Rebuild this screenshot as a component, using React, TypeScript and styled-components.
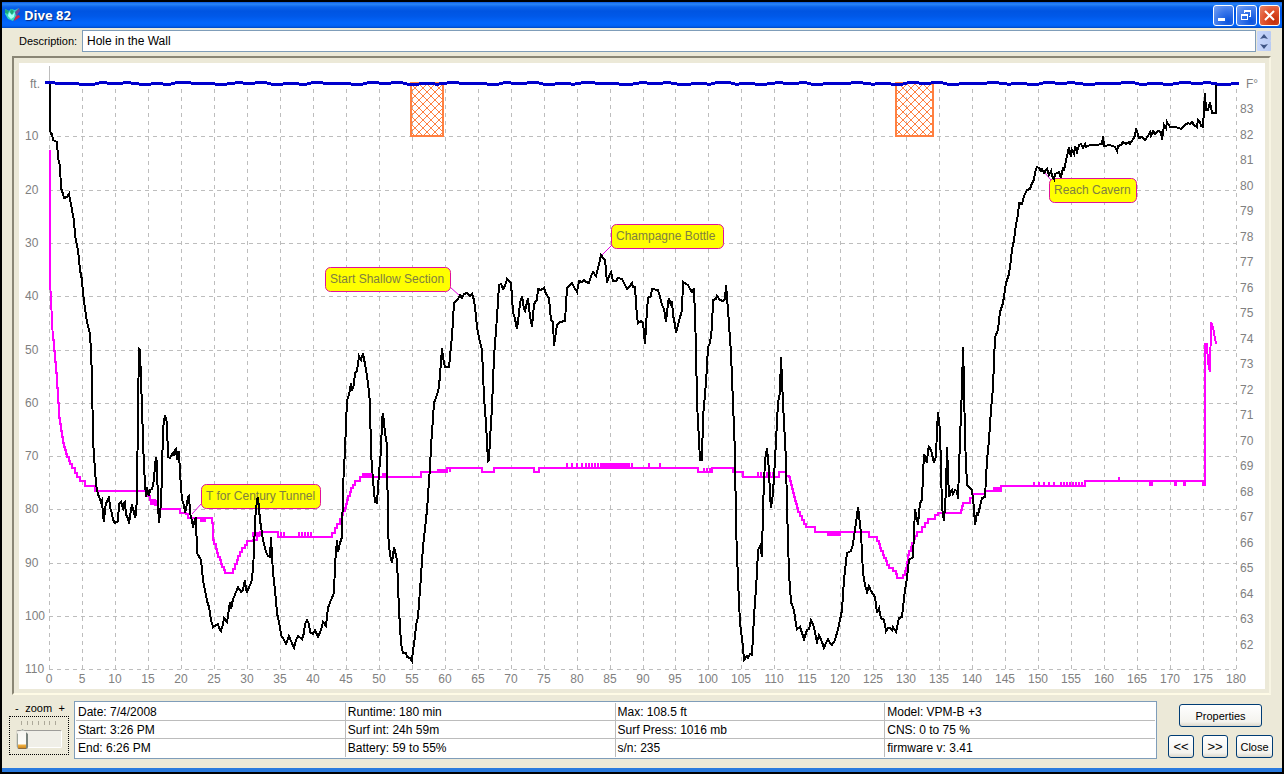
import React from "react";
import styled, { createGlobalStyle, css } from "styled-components";

const face = "#ece9d8";
const sans = '"Liberation Sans", Arial, sans-serif';

const GlobalStyle = createGlobalStyle`
  * { box-sizing: border-box; }
  body { margin: 0; background: #000; color: #000; font: 12px/16px ${sans}; }
`;

const Desktop = styled.div`
  display: flex;
  min-height: 100vh;
  padding: 2px;
  background: #000;
`;

const Window = styled.main`
  display: flex;
  flex: 1;
  flex-direction: column;
  min-width: 0;
  background: ${face};
  border-bottom: 4px solid #2a7ade;
`;

const TitleBar = styled.header`
  display: flex;
  align-items: center;
  gap: 3px;
  height: 26px;
  padding: 0 2px;
  background: linear-gradient(#0c5be0 0, #2a86f8 2px, #0a62ea 5px, #0055e2 9px, #0058e8 14px, #0366fc 21px, #0262f4 24px, #0048c4 26px);
`;

const Title = styled.h1`
  flex: 1;
  margin: 0;
  color: #fff;
  font: bold 13px/18px "Open Sans", "Noto Sans", sans-serif;
  text-shadow: 1px 1px 1px #0a2a80;
`;

const CaptionButtons = styled.div`
  display: flex;
  gap: 2px;
`;

const CaptionButton = styled.button<{ $close?: boolean }>`
  display: grid;
  place-items: center;
  width: 21px;
  height: 21px;
  padding: 0;
  border: 1px solid #fff;
  border-radius: 3px;
  background: ${(p) =>
    p.$close
      ? "radial-gradient(circle at 75% 80%, #c22d0a 0%, #e0502c 50%, #e98a6c 100%)"
      : "radial-gradient(circle at 75% 80%, #0a52dc 0%, #3a76ea 50%, #7da4f2 100%)"};
`;

const DescriptionRow = styled.div`
  display: flex;
  padding: 2px 11px 4px 17px;
`;

const DescriptionLabel = styled.label`
  width: 63px;
  font-size: 11px;
  line-height: 22px;
`;

const DescriptionInput = styled.input`
  flex: 1;
  min-width: 0;
  height: 22px;
  padding: 0 4px;
  border: 1px solid #7f9db9;
  background: #fff;
  color: #000;
  font: 12px/16px ${sans};
`;

const Spinner = styled.div`
  display: flex;
  flex-direction: column;
  margin: 1px 0 1px 1px;
`;

const SpinnerButton = styled.button`
  display: grid;
  flex: 1;
  place-items: center;
  width: 14px;
  padding: 0;
  border: 0;
  border-radius: 1px;
  background: linear-gradient(90deg, #c9d8fc, #b9cbf3);
`;

const ChartFrame = styled.section`
  margin: 0 11px 0 10px;
  padding: 5px 4px 4px 5px;
  border: 2px solid;
  border-color: #8a8675 #f8f5e4 #fffbe6 #8a8675;
`;

const Plot = styled.svg`
  display: block;
  width: 100%;
  height: auto;
  background: #fff;
  font: 12px ${sans};
`;

const Footer = styled.footer`
  display: flex;
  flex: 1;
  align-items: flex-start;
  padding: 6px 9px 9px 7px;
`;

const ZoomBox = styled.div`
  display: flex;
  flex-direction: column;
  width: 60px;
  margin-right: 5px;
`;

const ZoomLabel = styled.label`
  display: flex;
  justify-content: space-between;
  padding: 0 4px 0 6px;
  font-size: 11px;
  line-height: 15px;
`;

const SliderBox = styled.div`
  display: flex;
  flex-direction: column;
  gap: 3px;
  height: 39px;
  padding: 4px 6px;
  border: 1px dotted #000;
`;

const Ticks = styled.div`
  display: flex;
  justify-content: space-between;
  margin: 0 6px 0 5px;
`;

const Tick = styled.i`
  width: 1px;
  height: 4px;
  background: #aca899;
`;

const Slider = styled.input`
  width: 46px;
  height: 22px;
  margin: 0;
  appearance: none;
  background: none;

  &::-webkit-slider-runnable-track {
    height: 18px;
    border: 1px solid;
    border-color: #9d9c99 #fff #fff #d8d5c8;
    border-radius: 2px;
    background: #f0efe8;
  }

  &::-webkit-slider-thumb {
    appearance: none;
    width: 11px;
    height: 20px;
    margin-top: -2px;
    border-radius: 5px 5px 2px 2px;
    background:
      linear-gradient(90deg, #9aa39a 0 1px, transparent 1px 9px, #77807a 9px),
      linear-gradient(#8f9a94 0 1px, #f6f5ef 2px, #fdfdfb 15px, #f0b040 16px, #d08a20 19px, #8a6a40 19px);
    clip-path: polygon(50% 0, 100% 5px, 100% 100%, 0 100%, 0 5px);
  }
`;

const InfoBox = styled.div`
  flex: 1;
  min-width: 0;
  padding: 1px;
  border: 1px solid #7f9db9;
  background: #fff;
`;

const InfoTable = styled.table`
  width: 100%;
  border-collapse: separate;
  border-spacing: 0;
  table-layout: fixed;
`;

const InfoCell = styled.td<{ $lastRow: boolean; $lastColumn: boolean }>`
  height: 18px;
  padding: 2px 2px 0;
  overflow: hidden;
  line-height: 15px;
  vertical-align: top;
  white-space: nowrap;
  ${(p) => !p.$lastRow && css`border-bottom: 1px solid #bcbcbc;`}
  ${(p) => !p.$lastColumn && css`border-right: 1px solid #bcbcbc;`}
`;

const Actions = styled.div`
  display: flex;
  flex-direction: column;
  align-items: center;
  gap: 8px;
  margin: 3px 0 0 11px;
`;

const ActionRow = styled.div`
  display: flex;
  gap: 8px;
`;

const PushButton = styled.button<{ $width: number; $arrow?: boolean }>`
  width: ${(p) => p.$width}px;
  height: 23px;
  padding: 0;
  border: 1px solid #003c74;
  border-radius: 3px;
  background: linear-gradient(#fff, #f4f3ee 80%, #dcd8cc);
  color: #000;
  font: ${(p) => (p.$arrow ? 13 : 11)}px/16px ${sans};
`;

const gridColor = "#bdbdbd";
const temperatureColor = "#ff00ff";
const ceilingColor = "#ff8040";

type Point = [number, number];

const parse = (text: string): Point[] =>
  text.trim().split(/\s+/).map((pair) => pair.split(",").map(Number) as Point);

const depth = `
50,83 50,129 51,134 52,134 53,140 57,142 58,158 60,166 61,188 63,194 64,198 67,197 69,194 70,199 72,210 74,220
75,236 78,250 80,270 82,280 83,293 85,309 87,322 90,334 91,352 92,377 93,440 95,470 96,483 97,490 98,494 101,502
102,500 103,515 104,522 105,509 106,503 108,500 109,496 110,508 112,513 113,520 115,523 118,521 119,504 121,502
123,508 124,503 125,502 126,515 128,518 129,524 131,509 132,506 134,512 135,518 136,514 137,497 138,407 139,349
140,350 141,380 142,407 143,440 144,467 146,497 147,487 148,493 149,496 150,490 152,489 154,480 155,465 156,457
157,463 158,505 159,523 161,503 162,473 163,428 165,415 167,423 168,457 170,458 171,456 173,453 174,456 175,450
176,449 177,460 178,452 179,452 180,473 182,500 184,505 185,513 187,504 188,497 189,496 190,512 191,517 193,526
195,520 196,517 197,553 201,560 203,580 206,595 207,601 209,607 211,620 213,627 216,625 218,624 219,628 221,631
223,624 224,618 227,622 229,609 230,602 231,609 233,599 234,597 238,587 241,592 243,590 244,584 245,580 246,590
247,592 250,585 252,580 254,553 255,520 257,500 258,497 260,520 263,540 266,552 268,556 270,557 271,537 273,573
275,590 277,613 280,627 281,635 284,640 286,644 289,636 291,641 294,648 296,640 298,636 302,639 304,633 305,624
307,620 309,624 310,632 313,634 315,630 318,637 321,630 323,622 326,626 328,608 329,605 331,600 334,593 335,565
337,540 338,552 340,543 342,537 343,487 345,450 347,400 349,395 351,383 352,391 354,384 355,373 357,371 359,356
361,360 363,353 366,370 368,383 370,403 371,453 373,480 375,502 377,503 379,473 381,450 382,420 383,413 385,433
387,445 388,533 390,555 392,563 394,547 397,560 399,610 401,643 403,653 406,653 407,657 410,658 412,661 413,650
415,637 416,625 418,617 420,590 423,547 427,510 430,467 431,447 434,403 437,395 439,387 441,362 442,348 443,358
445,367 449,367 451,346 452,337 454,303 458,299 460,295 462,298 464,294 467,293 470,296 472,294 474,300 475,307
477,327 478,333 480,342 482,350 484,397 486,423 488,461 489,460 490,439 492,407 494,357 497,317 499,285 501,284
503,289 505,286 507,279 509,281 511,283 513,312 515,319 517,329 519,313 520,303 522,296 524,309 525,311 528,298
530,316 532,327 534,305 535,302 537,300 538,289 541,290 544,288 546,294 549,298 551,320 553,322 554,346 557,325
560,322 565,321 567,288 570,285 572,283 574,287 577,292 579,281 582,282 584,280 586,282 589,283 591,276 593,272
596,276 599,264 601,255 603,258 605,260 606,270 607,283 609,276 611,272 613,281 616,281 618,278 622,279 624,283
627,289 630,286 632,283 633,287 635,287 637,317 638,323 641,321 643,323 645,344 647,310 648,298 651,296 652,289
658,290 660,297 662,305 664,309 666,322 668,303 669,298 671,306 672,301 673,315 675,325 676,333 679,321 682,310
683,282 686,284 688,285 690,289 692,292 694,288 696,347 697,403 699,440 700,460 702,460 703,417 706,383 708,347
710,343 712,327 713,300 716,299 717,296 720,300 723,301 725,299 726,285 728,310 731,353 733,403 735,453 736,527
738,580 740,623 743,647 744,660 747,656 748,658 750,654 752,655 754,617 757,573 758,550 760,546 762,557 763,507
765,460 767,448 769,470 770,495 771,508 773,493 775,460 778,403 780,392 781,357 783,403 786,460 787,507 789,573
791,602 794,610 796,624 797,629 800,627 802,633 804,639 807,630 809,629 811,620 814,627 816,638 817,642 819,635
822,642 824,648 826,643 828,639 830,643 832,645 835,640 838,629 840,620 842,610 844,580 847,553 851,551 853,544
855,530 857,515 858,507 861,533 863,573 865,585 867,592 869,586 871,591 873,594 875,597 877,613 879,608 881,618
884,620 886,631 888,628 890,628 892,630 893,627 896,632 899,618 902,617 905,590 907,578 909,560 913,557 915,509
917,519 918,525 920,503 922,500 923,475 924,454 927,463 928,450 929,447 931,450 934,463 936,456 937,430 938,412
940,430 942,507 944,521 946,490 947,447 949,497 951,491 952,490 953,494 955,490 957,491 958,499 960,440 962,387
963,347 964,383 965,440 967,485 969,487 972,490 974,509 975,525 977,512 978,516 980,506 982,498 985,497 987,460
989,440 991,410 993,387 995,337 998,330 1000,312 1003,303 1006,283 1009,274 1010,267 1012,250 1014,240 1016,224
1018,215 1019,203 1022,204 1024,196 1027,190 1030,189 1032,183 1034,180 1035,172 1037,167 1039,168 1041,171
1042,169 1044,173 1046,170 1047,169 1049,175 1051,171 1052,176 1054,179 1055,174 1059,172 1061,178 1063,167
1064,171 1066,160 1068,152 1069,147 1071,157 1072,150 1074,154 1075,146 1077,152 1079,145 1081,144 1083,148
1085,144 1086,147 1090,145 1096,145 1102,144 1103,136 1104,146 1110,145 1115,147 1117,151 1118,146 1121,145
1123,142 1126,144 1129,142 1130,144 1133,139 1135,136 1136,128 1138,135 1139,138 1142,137 1145,140 1148,136
1150,132 1151,136 1153,131 1155,134 1158,131 1161,132 1162,140 1164,125 1166,128 1167,122 1170,127 1176,127
1181,129 1185,125 1188,123 1190,124 1192,122 1194,125 1197,127 1198,120 1200,122 1201,126 1203,127 1205,93
1206,110 1208,110 1210,102 1212,113 1216,113 1216,83`;

const temperature = `
50,150 50,280 52,320 53,340 56,373 59,418 63,443 67,457 72,468 77,477 80,481 85,486 95,491 145,491 150,500
155,505 158,509 178,509 180,513 186,514 188,518 212,523 213,540 217,553 222,567 225,573 230,573 235,564
240,552 247,541 253,540 257,535 260,532 277,532 278,537 329,537 335,528 342,515 347,500 351,488 355,481
360,477 420,477 421,472 446,472 447,468 482,468 482,472 493,472 494,468 533,468 534,472 538,472 539,468
698,468 698,472 711,472 712,468 732,468 733,472 742,472 743,477 778,477 779,472 784,472 786,476 789,477
793,493 798,512 802,520 806,527 814,527 815,532 868,532 869,537 876,537 880,548 884,558 889,568 896,574
897,578 902,578 906,568 908,555 912,543 917,532 922,527 928,519 935,515 938,513 960,513 963,503 970,498
973,494 983,494 985,491 1000,491 1001,486 1084,486 1085,481 1150,481 1150,485 1152,481 1174,481 1175,485
1176,481 1183,481 1184,485 1185,481 1202,481 1203,485 1205,485 1205,344 1207,344 1208,363 1210,372 1211,322
1213,327 1216,344`;

// [first x, last x, resting y, tip y, spacing] for each flickering reading
const flickers: number[][] = [
  [151, 157, 505, 500, 2], [201, 206, 518, 522, 2], [253, 259, 537, 532, 2],
  [278, 286, 537, 532, 3], [299, 313, 537, 532, 3], [363, 371, 477, 473, 2],
  [383, 387, 477, 473, 2], [438, 446, 472, 469, 2], [450, 451, 468, 472, 4],
  [567, 583, 468, 463, 5], [586, 600, 468, 463, 3], [601, 629, 468, 463, 2],
  [632, 632, 468, 463, 2], [649, 649, 468, 463, 2], [660, 660, 468, 463, 2],
  [704, 711, 472, 468, 3], [758, 774, 477, 472, 3], [828, 841, 532, 536, 2],
  [994, 1001, 491, 487, 2], [1034, 1058, 486, 482, 5], [1061, 1083, 486, 482, 3],
  [1119, 1119, 481, 477, 2],
];

const linePath = (points: Point[]) =>
  points.map(([x, y], i) => `${i ? "L" : "M"}${x} ${y}`).join("");

const stairPath = (points: Point[]) =>
  points
    .map(([x, y], i) => {
      if (!i) return `M${x} ${y}`;
      const [px, py] = points[i - 1];
      const count = Math.max(1, Math.min(x - px, Math.round(Math.abs(y - py) / 4)));
      if (x > 1204 || x < 56 || x === px) return `L${x} ${y}`;
      return Array.from({ length: count }, (_, k) => {
        const t = (k + 1) / count;
        return `H${Math.round(px + (x - px) * t)}V${Math.round(py + (y - py) * t)}`;
      }).join("");
    })
    .join("");

const flickerPath = flickers
  .map(([from, to, rest, tip, step]) => {
    let d = "";
    for (let x = from; x <= to; x += step) d += `M${x} ${rest}V${tip}`;
    return d;
  })
  .join("");

const surfacePath = linePath(
  Array.from({ length: 598 }, (_, i) => {
    const x = 45 + i * 2;
    return [x, Math.round(83 + 0.7 * Math.sin(x / 4.3) + 0.6 * Math.sin(x / 10.7) + 0.3 * (i % 2))] as Point;
  })
);

const minuteX = (m: number) => Math.round(49 + (m * 1187) / 180);
const depthY = (d: number) => Math.round(83 + d * 5.33);

const minutes = Array.from({ length: 37 }, (_, i) => i * 5);
const depths = Array.from({ length: 11 }, (_, i) => (i + 1) * 10);
const degrees = Array.from({ length: 22 }, (_, i) => 83 - i);

const ceilings = [
  { x: 411, width: 32 },
  { x: 896, width: 37 },
];

const notes = [
  { text: "T for Century Tunnel", x: 201, y: 484, width: 120, from: [202, 503], to: [192, 514] },
  { text: "Start Shallow Section", x: 325, y: 267, width: 126, from: [450, 287], to: [460, 296] },
  { text: "Champagne Bottle", x: 611, y: 224, width: 113, from: [612, 245], to: [602, 255] },
  { text: "Reach Cavern", x: 1049, y: 178, width: 88, from: [1051, 180], to: [1045, 173] },
];

function DiveChart() {
  return (
    <Plot viewBox="19 63 1246 626" role="img" aria-label="Depth and temperature profile">
      <defs>
        <pattern id="hatch" x="411" y="84" width="8" height="8" patternUnits="userSpaceOnUse">
          <path d="M0 0L8 8M8 0L0 8" stroke={ceilingColor} />
        </pattern>
      </defs>
      <g stroke={gridColor} strokeDasharray="4 4" shapeRendering="crispEdges">
        {minutes.map((m) => (
          <line key={m} x1={minuteX(m) + 0.5} x2={minuteX(m) + 0.5} y1="89" y2="670" />
        ))}
        {depths.map((d) => (
          <line key={d} x1="49" x2="1236" y1={depthY(d) + 0.5} y2={depthY(d) + 0.5} />
        ))}
        <line x1="49.5" x2="49.5" y1="66" y2="83" strokeDasharray="none" />
      </g>
      <g fill="#808080">
        <text x="30" y="88">ft.</text>
        {depths.map((d) => (
          <text key={d} x="25" y={depthY(d) + 4}>{d}</text>
        ))}
        {minutes.map((m) => (
          <text key={m} x={minuteX(m)} y="683" textAnchor="middle">{m}</text>
        ))}
        <text x="1246" y="88">F°</text>
        {degrees.map((f, i) => (
          <text key={f} x="1240" y={Math.round(113 + i * 25.52)}>{f}</text>
        ))}
      </g>
      {ceilings.map((c) => (
        <rect key={c.x} x={c.x} y="83" width={c.width} height="53" fill="url(#hatch)" stroke={ceilingColor} strokeWidth="2" />
      ))}
      <g fill="none" stroke={temperatureColor} strokeWidth="2" shapeRendering="crispEdges">
        <path d={stairPath(parse(temperature))} />
        <path d={flickerPath} />
      </g>
      {notes.map((n) => (
        <g key={n.text}>
          <line x1={n.from[0]} y1={n.from[1]} x2={n.to[0]} y2={n.to[1]} stroke="#e000e0" />
          <rect x={n.x + 0.5} y={n.y + 0.5} width={n.width - 1} height="24" rx="5" fill="#ffff00" stroke="#e0109c" />
          <text x={n.x + 5} y={n.y + 16} fill="#808040">{n.text}</text>
        </g>
      ))}
      <path d={linePath(parse(depth))} fill="none" stroke="#000" strokeWidth="2" shapeRendering="crispEdges" />
      <path d={surfacePath} fill="none" stroke="#0000cc" strokeWidth="3" shapeRendering="crispEdges" />
    </Plot>
  );
}

const info = [
  ["Date: 7/4/2008", "Runtime: 180 min", "Max: 108.5 ft", "Model: VPM-B +3"],
  ["Start: 3:26 PM", "Surf int: 24h 59m", "Surf Press: 1016 mb", "CNS: 0 to 75 %"],
  ["End: 6:26 PM", "Battery: 59 to 55%", "s/n: 235", "firmware v: 3.41"],
];

export default function App() {
  return (
    <Desktop>
      <GlobalStyle />
      <Window>
        <TitleBar>
          <svg width="17" height="16" viewBox="0 0 17 16" aria-hidden="true">
            <path d="M1 2l4 2 2-2 4 1 4-2-1 5-5 8-5-2-3-5z" fill="#35d8c0" />
            <path d="M1 2l4 2-1 3-3-1zM7 2l3 2-2 4-2-3z" fill="#20a878" />
            <path d="M5 5l3 3 3-3-1 5-3 2-3-3z" fill="#a8fff4" />
            <path d="M11 5l4-4 1 3-4 5z" fill="#6c4a9c" />
            <path d="M12 9l3-1 1 2-6 4 1-3z" fill="#d02848" />
          </svg>
          <Title>Dive 82</Title>
          <CaptionButtons>
            <CaptionButton type="button" aria-label="Minimize">
              <svg width="19" height="19"><path d="M4 12h7v3H4z" fill="#fff" /></svg>
            </CaptionButton>
            <CaptionButton type="button" aria-label="Restore">
              <svg width="19" height="19" fill="none" stroke="#fff" shapeRendering="crispEdges">
                <path d="M7.500 7V4.500H13.500V10.500H12M7 5.500H14" />
                <path d="M4.500 8.500H10.500V13.500H4.500ZM4 9.500H11" />
              </svg>
            </CaptionButton>
            <CaptionButton type="button" $close aria-label="Close window">
              <svg width="19" height="19"><path d="M5 5L14 14M14 5L5 14" stroke="#fff" strokeWidth="2" /></svg>
            </CaptionButton>
          </CaptionButtons>
        </TitleBar>
        <DescriptionRow>
          <DescriptionLabel htmlFor="description">Description:</DescriptionLabel>
          <DescriptionInput id="description" defaultValue="Hole in the Wall" />
          <Spinner>
            <SpinnerButton type="button" aria-label="Previous description">
              <svg width="8" height="5"><path d="M0 5L4 0L8 5L4 4Z" fill="#3f5585" /></svg>
            </SpinnerButton>
            <SpinnerButton type="button" aria-label="Next description">
              <svg width="8" height="5"><path d="M0 0L4 5L8 0L4 1Z" fill="#3f5585" /></svg>
            </SpinnerButton>
          </Spinner>
        </DescriptionRow>
        <ChartFrame>
          <DiveChart />
        </ChartFrame>
        <Footer>
          <ZoomBox>
            <ZoomLabel htmlFor="zoom">
              <span>-</span>
              <span>zoom</span>
              <span>+</span>
            </ZoomLabel>
            <SliderBox>
              <Ticks>
                {Array.from({ length: 7 }, (_, i) => <Tick key={i} />)}
              </Ticks>
              <Slider id="zoom" type="range" min="0" max="6" defaultValue="0" />
            </SliderBox>
          </ZoomBox>
          <InfoBox>
            <InfoTable>
              <tbody>
                {info.map((row, r) => (
                  <tr key={row[0]}>
                    {row.map((cell, c) => (
                      <InfoCell key={cell} $lastRow={r === info.length - 1} $lastColumn={c === row.length - 1}>
                        {cell}
                      </InfoCell>
                    ))}
                  </tr>
                ))}
              </tbody>
            </InfoTable>
          </InfoBox>
          <Actions>
            <PushButton type="button" $width={83}>Properties</PushButton>
            <ActionRow>
              <PushButton type="button" $width={26} $arrow>&lt;&lt;</PushButton>
              <PushButton type="button" $width={26} $arrow>&gt;&gt;</PushButton>
              <PushButton type="button" $width={37}>Close</PushButton>
            </ActionRow>
          </Actions>
        </Footer>
      </Window>
    </Desktop>
  );
}
